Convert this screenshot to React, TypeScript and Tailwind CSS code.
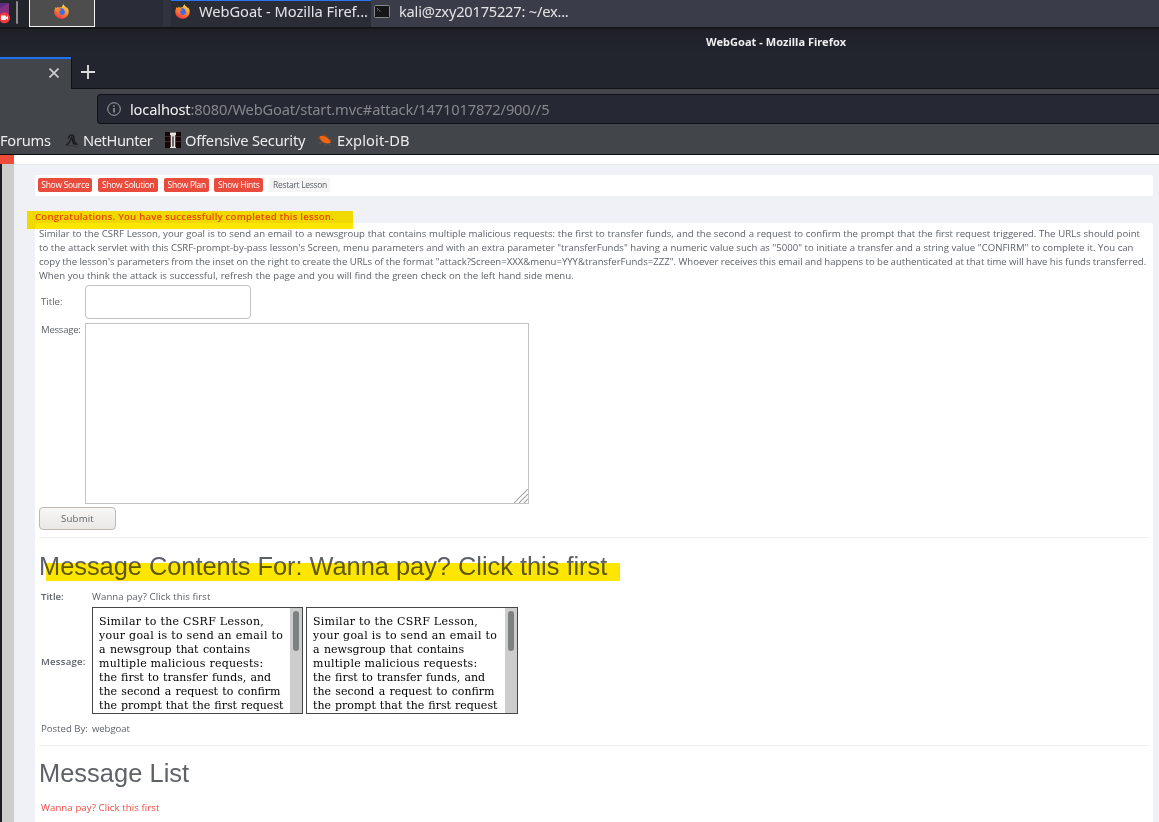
import { useId } from 'react'

const lessonActions = [
  { label: 'Show Source', box: 'w-[54px] mr-[6px]' },
  { label: 'Show Solution', box: 'w-[60px] mr-[6px]' },
  { label: 'Show Plan', box: 'w-[45px] mr-[5px]' },
  { label: 'Show Hints', box: 'w-[49px] mr-[6px]' },
]

const instructions = [
  {
    text: 'Similar to the CSRF Lesson, your goal is to send an email to a newsgroup that contains multiple malicious requests: the first to transfer funds, and the second a request to confirm the prompt that the first request triggered. The URLs should point',
    spacing: '[word-spacing:0.25px]',
  },
  {
    text: 'to the attack servlet with this CSRF-prompt-by-pass lesson\'s Screen, menu parameters and with an extra parameter "transferFunds" having a numeric value such as "5000" to initiate a transfer and a string value "CONFIRM" to complete it. You can',
    spacing: '[word-spacing:0.1px]',
  },
  {
    text: 'copy the lesson\'s parameters from the inset on the right to create the URLs of the format "attack?Screen=XXX&menu=YYY&transferFunds=ZZZ". Whoever receives this email and happens to be authenticated at that time will have his funds transferred.',
    spacing: '[word-spacing:-0.16px]',
  },
  {
    text: 'When you think the attack is successful, refresh the page and you will find the green check on the left hand side menu.',
    spacing: '[word-spacing:0.3px]',
  },
]

const frameLines = [
  { text: 'Similar to the CSRF Lesson,', spacing: 'tracking-[0.28px]' },
  { text: 'your goal is to send an email to', spacing: 'tracking-[0.28px]' },
  { text: 'a newsgroup that contains', spacing: '[word-spacing:0.9px]' },
  { text: 'multiple malicious requests:', spacing: 'tracking-[0.23px]' },
  { text: 'the first to transfer funds, and', spacing: '[word-spacing:0.6px]' },
  { text: 'the second a request to confirm', spacing: '[word-spacing:0.8px]' },
  { text: 'the prompt that the first request', spacing: '[word-spacing:0.5px]' },
]

function FirefoxIcon() {
  const id = useId()
  return (
    <svg viewBox="0 0 16 16" className="h-[15px] w-[15px] shrink-0">
      <defs>
        <linearGradient id={id} x1="0.8" y1="0" x2="0.3" y2="1">
          <stop offset="0" stopColor="#ffe14a" />
          <stop offset="0.5" stopColor="#ff8a2a" />
          <stop offset="1" stopColor="#f5304a" />
        </linearGradient>
      </defs>
      <path
        d="M1.9 3.2 L3 4.4 L4.1 2.6 L5.2 4 C6 3.2 7.3 3.3 8.4 3.4 C8.6 1.9 9.4 0.9 10.3 0.2 C10.5 2.1 12.6 2.6 13.6 4.2 L14 3.8 C15.5 5.5 15.9 7.6 15.6 9.4 C15 13.2 11.8 15.8 8 15.8 C3.8 15.8 0.4 12.6 0.3 8.6 C0.3 6.5 0.9 4.6 1.9 3.2 Z"
        fill={`url(#${id})`}
      />
      <path d="M5 5.5 C6.5 4.2 9.4 4 10.8 6 C12 7.8 11.8 10.2 10.4 11.2 C8.6 12.3 6 11.5 5.2 9.6 Z" fill="#3b6be8" />
      <path d="M2.2 5.2 C4 4.8 5.8 5.1 7.8 6.2 C7.4 7.2 6 7.3 5.6 8 C5.2 8.8 5.8 9.8 7 10.1 C4.5 11 2.2 8.6 2.2 5.2 Z" fill="#ff7a2c" />
    </svg>
  )
}

function TerminalIcon() {
  return (
    <svg viewBox="0 0 16 13" className="h-[13px] w-4 shrink-0">
      <rect x="0.5" y="0.5" width="15" height="12" rx="1" fill="#151617" stroke="#85888c" />
      <path d="M3 3 L4.5 4.5 L3 5.5 M5 6 H6.5" stroke="#888" strokeWidth="0.8" fill="none" />
    </svg>
  )
}

function Taskbar() {
  return (
    <div className="flex h-[27px] bg-[#3a3d49]">
      <div className="flex w-[163px] bg-[#2a2c37]">
        <div className="flex w-[29px] bg-[#22242c]">
          <svg viewBox="0 0 20 27" className="h-[27px] w-5">
            <rect x="0" y="3" width="9" height="16" fill="#5a2d82" />
            <path d="M0 8 L9 3 V14 H0 Z" fill="#833083" />
            <circle cx="4.5" cy="17.8" r="5.5" fill="#f03a3f" />
            <rect x="1" y="15.5" width="5" height="4.5" rx="1" fill="#fff" />
            <path d="M5.5 18 L8 15.5 V20 Z" fill="#fff" />
            <rect x="16" y="1" width="2" height="23" rx="1" fill="#8b8b90" />
          </svg>
        </div>
        <div className="flex w-[66px] justify-center border border-t-0 border-[#f1f1f1] bg-[#4d4d4d] pr-px pt-[4px]">
          <FirefoxIcon />
        </div>
      </div>
      <div className="w-2 bg-[#31333e]" />
      <div className="flex w-[200px] border-t border-[#2a74f5] bg-[#2b2d36] pl-[4px] pt-[3px] text-[#e4e4e6]">
        <FirefoxIcon />
        <span className="-mt-px ml-[9px] whitespace-nowrap text-[14.67px] leading-4 tracking-[-0.05px]">WebGoat - Mozilla Firef...</span>
      </div>
      <div className="flex pl-[3px] pt-[5px] text-[#e4e4e6]">
        <TerminalIcon />
        <span className="-mt-[2px] ml-[9px] whitespace-nowrap text-[14.67px] leading-4 tracking-[-0.22px]">kali@zxy20175227: ~/ex...</span>
      </div>
    </div>
  )
}

function BrowserChrome() {
  return (
    <div className="border-y-2 border-b border-t-[#15161a] border-b-[#0c0c0d] bg-[#42454a]">
      <div className="flex h-[60px] border-b border-[#101116] bg-gradient-to-b from-[#1e2026] to-[#22252d] to-40%">
        <div className="mt-7 flex h-8 w-[71px] border-t-2 border-[#2072f5] bg-[#42454a] pl-[49px] pt-[9px]">
          <svg viewBox="0 0 10 10" className="h-[10px] w-[10px]">
            <path d="M0.5 0.5 L9.5 9.5 M9.5 0.5 L0.5 9.5" stroke="#d0d0d2" strokeWidth="1.6" />
          </svg>
        </div>
        <div className="mt-7 h-8 w-px bg-[#101116]" />
        <svg viewBox="0 0 14 14" className="ml-[9px] mt-9 h-[14px] w-[14px]">
          <path d="M7 0 V14 M0 7 H14" stroke="#dcdcde" strokeWidth="1.9" />
        </svg>
        <span className="ml-[611px] mt-[5px] whitespace-nowrap text-[11px] font-bold leading-4 tracking-[0.04px] text-[#eeeeef]">
          WebGoat - Mozilla Firefox
        </span>
      </div>
      <div className="h-[65px] pt-[5px]">
        <div className="ml-[97px] flex h-[30px] items-center rounded-l border border-r-0 border-[#101116] bg-[#262933] pl-[9px]">
          <svg viewBox="0 0 14 14" className="h-[14px] w-[14px]">
            <circle cx="7" cy="7" r="6.3" fill="none" stroke="#a5a6aa" />
            <path d="M7 6 V10.5 M7 3.3 V4.8" stroke="#a5a6aa" strokeWidth="1.4" />
          </svg>
          <span className="ml-[9px] whitespace-nowrap text-[14.67px] leading-5 tracking-[-0.16px] text-[#85878c]">
            <span className="text-[#f5f5f6]">localhost</span>:8080/WebGoat/start.mvc#attack/1471017872/900//5
          </span>
        </div>
        <div className="mt-[6px] flex h-5 items-center whitespace-nowrap text-[14.67px] leading-5 text-[#ececed]">
          <span className="w-16 tracking-[-0.25px]">Forums</span>
          <svg viewBox="0 0 16 16" className="mr-1 h-4 w-[15px]">
            <path
              d="M4.5 6.5 C5 3.5 7.5 2 9.5 3.2 C11.5 4.5 10.2 7.5 11.2 9.5 C11.8 11 12.8 11.5 13.5 12.2 L10.5 12 C9 10 9.5 7 8.2 5.2 C7 6.8 7 9.5 4.5 11.8 L2.5 13.5"
              fill="none"
              stroke="#1b1c1f"
              strokeWidth="1.6"
            />
            <path d="M1.5 14.5 C4 13 8 14 14.5 15" stroke="#303236" fill="none" />
          </svg>
          <span className="w-[82px] tracking-[-0.42px]">NetHunter</span>
          <svg viewBox="0 0 16 16" className="mr-1 h-4 w-4">
            <rect width="16" height="16" fill="#170607" />
            <path d="M0 4.5 H5 M11 4.5 H16 M0 9.5 H5 M11 9.5 H16" stroke="#44292a" />
            <path d="M5 0.5 H11 V3 H10.3 V15 H11 V16 H5 V15 H5.7 V3 H5 Z" fill="#e5e2e2" />
            <path d="M8 3.5 L8.6 5 V14.5 H7.4 V5 Z" fill="#241214" />
          </svg>
          <span className="w-[132px] tracking-[-0.22px]">Offensive Security</span>
          <svg viewBox="0 0 16 16" className="mr-1 h-4 w-4">
            <path d="M2.5 4.5 C5 3 8 4 10.5 6 C12.5 7.5 14 9 13.5 10.5 C12 12 9 11.5 6.5 10.5 C4.5 9.5 2.5 7 2.5 4.5 Z" fill="#f2640f" />
            <path d="M1 6.5 H3.5 M2.5 11.5 L6 9.5 M7.5 2 L7 4.5 M9 3.5 L11 5.5 M13 8 L15 8 M8 10.5 L8.5 13 M12 11 L13 13.5" stroke="#a84d1b" strokeWidth="0.8" />
          </svg>
          <span className="tracking-[0.1px]">Exploit-DB</span>
        </div>
      </div>
    </div>
  )
}

function MessageFrame() {
  return (
    <div className="flex h-[107px] w-full justify-between overflow-hidden border border-[#454648] bg-white">
      <div className="pl-[6px] pt-[7px] font-['DejaVu_Serif'] text-[11px] leading-[14px] text-black">
        {frameLines.map(({ text, spacing }) => (
          <p key={text} className={`whitespace-nowrap ${spacing}`}>
            {text}
          </p>
        ))}
      </div>
      <div className="w-3 shrink-0 bg-[#cdcdcd] pl-[3px] pt-[3px]">
        <div className="h-10 w-[6px] rounded-full bg-[#7d8181]" />
      </div>
    </div>
  )
}

function LessonForm() {
  return (
    <div>
      <div className="flex h-[34px] items-center">
        <span className="w-[46px] pl-[2px]">Title:</span>
        <div className="h-[34px] w-[166px] rounded border border-[#c5c3c0] bg-white" />
      </div>
      <div className="mt-1 flex h-[181px]">
        <span className="w-[46px] pl-[2px] leading-[14px] tracking-[-0.25px]">Message:</span>
        <div className="flex w-[444px] items-end justify-end border border-[#c5c3c0] bg-white">
          <svg viewBox="0 0 14 14" className="h-[14px] w-[14px]">
            <path d="M0 14 L14 0 M5 14 L14 5 M10 14 L14 10" stroke="#aaa" strokeWidth="1.2" />
          </svg>
        </div>
      </div>
      <div className="mt-[3px] flex h-[23px] w-[77px] items-center justify-center rounded border border-[#bfb8b1] bg-gradient-to-b from-[#f8f7f6] to-[#e9e8e7] pt-px tracking-[0.2px]">
        Submit
      </div>
    </div>
  )
}

function LessonPage() {
  return (
    <div className="flex h-[667px]">
      <div className="flex w-[14px] flex-col">
        <div className="h-[9px] bg-[#ee4b38]" />
        <div className="flex-1 border-l-2 border-[#1d1e20] bg-[#cdcdcd]" />
      </div>
      <div className="flex-1 bg-[#f0f1f6] font-['Open_Sans'] text-[9.6px] text-[#5e6268]">
        <div className="h-[10px] border-b border-[#e5e6e9] bg-white" />
        <div className="ml-[21px] mr-[6px] pt-[10px]">
          <div className="flex h-[21px] rounded-[2px] bg-white pl-[3px] pt-[3px] text-[8.5px] leading-[14px] tracking-[-0.3px]">
            {lessonActions.map(({ label, box }) => (
              <span key={label} className={`${box} h-[14px] whitespace-nowrap rounded-[2px] bg-[#e94b3c] pl-[0.5px] text-center text-white`}>
                {label}
              </span>
            ))}
            <span className="h-[14px] w-[61px] whitespace-nowrap rounded-[2px] bg-[#f5f5f5] pl-px text-center">Restart Lesson</span>
          </div>
          <div className="relative h-[27px] pt-[14px]">
            <p className="whitespace-nowrap font-semibold leading-[14px] tracking-[0.22px] text-[#e94b3c]">
              Congratulations. You have successfully completed this lesson.
            </p>
            <div className="absolute -left-2 top-[15px] z-10 h-[18px] w-[326px] bg-[#ffe600] mix-blend-multiply" />
          </div>
          <div className="h-[599px] overflow-hidden rounded-t-[2px] bg-white px-1 pt-1">
            <div className="h-[58px]">
              {instructions.map(({ text, spacing }) => (
                <p key={text} className={`whitespace-nowrap leading-[14px] ${spacing}`}>
                  {text}
                </p>
              ))}
            </div>
            <LessonForm />
            <div className="mt-[7px] h-px bg-[#ededed]" />
            <div className="relative h-[52px] pt-[13px]">
              <h1 className="whitespace-nowrap font-['Liberation_Sans'] text-[25.4px] leading-[30px] tracking-[-0.02px]">
                Message Contents For: Wanna pay? Click this first
              </h1>
              <div className="absolute left-[7px] top-[25px] h-[18px] w-[574px] bg-[#ffe600] mix-blend-multiply" />
            </div>
            <div className="flex leading-[14px]">
              <span className="w-[53px] pl-[2px] font-semibold">Title:</span>
              <span className="tracking-[0.1px]">Wanna pay? Click this first</span>
            </div>
            <div className="mt-[3px] flex items-center">
              <span className="w-[53px] pl-[2px] pt-1 font-semibold tracking-[0.25px]">Message:</span>
              <div className="grid grid-cols-[211px_212px] gap-[3px]">
                <MessageFrame />
                <MessageFrame />
              </div>
            </div>
            <div className="mt-2 flex leading-[14px]">
              <span className="w-[53px] whitespace-nowrap pl-[2px]">Posted By:</span>
              <span className="tracking-[-0.1px]">webgoat</span>
            </div>
            <div className="mt-[9px] h-px bg-[#ededed]" />
            <h1 className="mt-3 whitespace-nowrap font-['Liberation_Sans'] text-[25.4px] leading-[30px] tracking-[0.05px]">Message List</h1>
            <p className="mt-[13px] whitespace-nowrap pl-[2px] leading-[14px] tracking-[0.1px] text-[#ee4b43]">Wanna pay? Click this first</p>
          </div>
        </div>
      </div>
    </div>
  )
}

export default function App() {
  return (
    <div className="h-[822px] w-[1159px] overflow-hidden font-['Noto_Sans']">
      <Taskbar />
      <BrowserChrome />
      <LessonPage />
    </div>
  )
}
